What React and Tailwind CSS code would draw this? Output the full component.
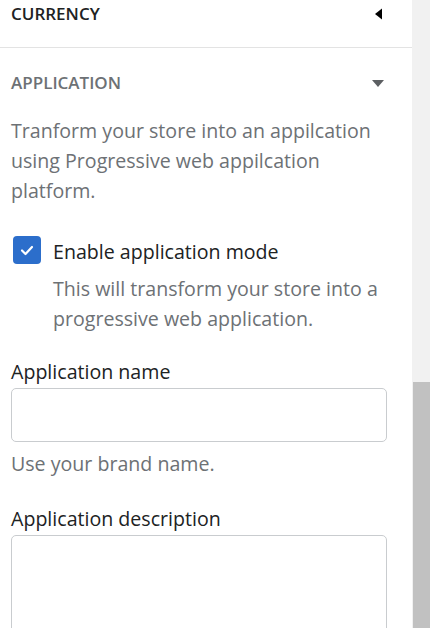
import React from "react";

const font = { fontFamily: '"Open Sans", "Noto Sans", sans-serif' };

function CaretLeft() {
  return (
    <svg width="9" height="12" viewBox="0 0 9 12" className="block">
      <path d="M8 0.5 L1 6 L8 11.5 Z" fill="#000" />
    </svg>
  );
}

function CaretDown() {
  return (
    <svg width="12" height="7" viewBox="0 0 12 7" className="block">
      <path d="M0 0 L12 0 L6 7 Z" fill="#5c5f62" />
    </svg>
  );
}

export default function App() {
  return (
    <div className="flex w-[430px] h-[628px] overflow-hidden bg-white" style={font}>
      <div className="w-[412px] shrink-0">
        {/* collapsed section */}
        <div className="h-[48px] border-b border-[#e3e3e3] flex items-start justify-between pl-[11px] pr-[29px]">
          <span className="text-[17px] leading-[28px] font-semibold text-[#202223] uppercase">Currency</span>
          <span className="mt-[8px]"><CaretLeft /></span>
        </div>

        {/* open section */}
        <div className="px-[11px] pt-[21px]">
          <div className="flex items-center justify-between pr-[17px] h-[28px]">
            <span className="text-[17px] font-semibold text-[#6d7175] uppercase">Application</span>
            <CaretDown />
          </div>
          <p className="mt-[19px] text-[19.6px] leading-[30px] text-[#6d7175] pr-[10px]">
            Tranform your store into an appilcation using Progressive web appilcation platform.
          </p>

          <div className="mt-[31px] flex items-start gap-[12px] pl-[2px]">
            <div className="mt-[-1px] w-[28px] h-[28px] rounded-[4px] bg-[#2c6ecb] flex items-center justify-center shrink-0">
              <svg width="14" height="11" viewBox="0 0 14 11">
                <path d="M2 5.5 L5.5 9 L12 2" fill="none" stroke="#fff" strokeWidth="2.2" strokeLinecap="round" strokeLinejoin="round" />
              </svg>
            </div>
            <div className="flex flex-col">
              <span className="text-[19.6px] leading-[30px] text-[#202223]">Enable application mode</span>
              <span className="mt-[7px] text-[19.6px] leading-[30px] text-[#6d7175]">
                This will transform your store into a progressive web application.
              </span>
            </div>
          </div>

          <label className="block mt-[23px] text-[19.6px] leading-[30px] text-[#202223]">Application name</label>
          <input className="mt-[1px] block w-[376px] h-[54px] border border-[#c9cccf] rounded-[5px] outline-none" />
          <div className="mt-[7px] text-[19.6px] leading-[30px] text-[#6d7175]">Use your brand name.</div>

          <label className="block mt-[25px] text-[19.6px] leading-[30px] text-[#202223]">Application description</label>
          <textarea className="mt-[1px] block w-[376px] h-[140px] border border-[#c9cccf] rounded-[5px] outline-none resize-none" />
        </div>
      </div>

      {/* scrollbar */}
      <div className="w-[18px] bg-[#f1f1f1] flex flex-col pl-[1px]">
        <div className="h-[382px]" />
        <div className="flex-1 bg-[#c1c1c1]" />
      </div>
    </div>
  );
}
